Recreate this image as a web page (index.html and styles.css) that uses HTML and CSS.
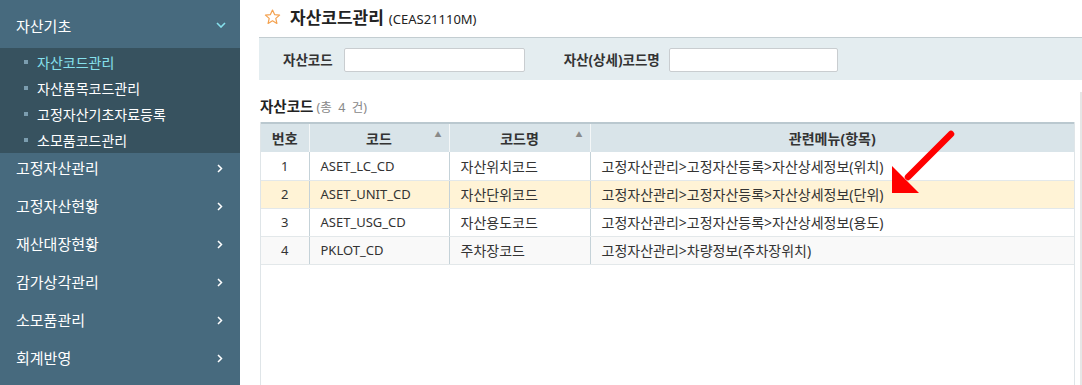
FILE: index.html
```html
<!DOCTYPE html>
<html lang="ko">
<head>
<meta charset="utf-8">
<title>자산코드관리</title>
<link rel="stylesheet" href="styles.css">
</head>
<body>
<aside class="sidebar">
  <div class="side-head">
    <span>자산기초</span>
    <svg class="chev-down" width="10" height="6" viewBox="0 0 10 6"><polyline points="1,1 5,5 9,1" fill="none" stroke="#86e0ec" stroke-width="1.6"/></svg>
  </div>
  <ul class="submenu">
    <li class="sub-item active"><i class="dot"></i>자산코드관리</li>
    <li class="sub-item"><i class="dot"></i>자산품목코드관리</li>
    <li class="sub-item"><i class="dot"></i>고정자산기초자료등록</li>
    <li class="sub-item"><i class="dot"></i>소모품코드관리</li>
  </ul>
  <ul class="menu">
    <li class="menu-item"><span>고정자산관리</span><svg width="6" height="9" viewBox="0 0 6 9"><polyline points="1,1 4.5,4.5 1,8" fill="none" stroke="#fff" stroke-width="1.5"/></svg></li>
    <li class="menu-item"><span>고정자산현황</span><svg width="6" height="9" viewBox="0 0 6 9"><polyline points="1,1 4.5,4.5 1,8" fill="none" stroke="#fff" stroke-width="1.5"/></svg></li>
    <li class="menu-item"><span>재산대장현황</span><svg width="6" height="9" viewBox="0 0 6 9"><polyline points="1,1 4.5,4.5 1,8" fill="none" stroke="#fff" stroke-width="1.5"/></svg></li>
    <li class="menu-item"><span>감가상각관리</span><svg width="6" height="9" viewBox="0 0 6 9"><polyline points="1,1 4.5,4.5 1,8" fill="none" stroke="#fff" stroke-width="1.5"/></svg></li>
    <li class="menu-item"><span>소모품관리</span><svg width="6" height="9" viewBox="0 0 6 9"><polyline points="1,1 4.5,4.5 1,8" fill="none" stroke="#fff" stroke-width="1.5"/></svg></li>
    <li class="menu-item"><span>회계반영</span><svg width="6" height="9" viewBox="0 0 6 9"><polyline points="1,1 4.5,4.5 1,8" fill="none" stroke="#fff" stroke-width="1.5"/></svg></li>
  </ul>
</aside>
<main class="main">
  <div class="title-row">
    <svg class="star" width="17" height="16" viewBox="0 0 17 16"><polygon points="8.5,1 10.6,5.6 15.6,6.1 11.8,9.4 12.9,14.4 8.5,11.8 4.1,14.4 5.2,9.4 1.4,6.1 6.4,5.6" fill="none" stroke="#f4a14e" stroke-width="1.2" stroke-linejoin="round"/></svg>
    <h1 class="title">자산코드관리</h1>
    <span class="title-code">(CEAS21110M)</span>
  </div>
  <div class="search">
    <label class="s-label">자산코드</label>
    <input class="s-input w1" type="text">
    <label class="s-label second">자산(상세)코드명</label>
    <input class="s-input w2" type="text">
  </div>
  <section class="content">
    <div class="grid-title"><b>자산코드</b><span class="count">(총&nbsp; 4&nbsp; 건)</span></div>
    <div class="grid">
      <table class="tbl">
        <colgroup><col class="c1"><col class="c2"><col class="c3"><col class="c4"></colgroup>
        <thead>
          <tr><th>번호</th><th class="sortable">코드<span class="sort">▲</span></th><th class="sortable">코드명<span class="sort">▲</span></th><th>관련메뉴(항목)</th></tr>
        </thead>
        <tbody>
          <tr><td class="num">1</td><td>ASET_LC_CD</td><td class="ko">자산위치코드</td><td class="ko">고정자산관리&gt;고정자산등록&gt;자산상세정보(위치)</td></tr>
          <tr class="hl"><td class="num">2</td><td>ASET_UNIT_CD</td><td class="ko">자산단위코드</td><td class="ko">고정자산관리&gt;고정자산등록&gt;자산상세정보(단위)</td></tr>
          <tr><td class="num">3</td><td>ASET_USG_CD</td><td class="ko">자산용도코드</td><td class="ko">고정자산관리&gt;고정자산등록&gt;자산상세정보(용도)</td></tr>
          <tr class="alt"><td class="num">4</td><td>PKLOT_CD</td><td class="ko">주차장코드</td><td class="ko">고정자산관리&gt;차량정보(주차장위치)</td></tr>
        </tbody>
      </table>
    </div>
  </section>
</main>
<svg class="red-arrow" width="80" height="80" viewBox="0 0 80 80">
  <line x1="65" y1="10" x2="22" y2="53" stroke="#f00" stroke-width="6.5" stroke-linecap="round"/>
  <polygon points="6,69 6,42 33,69" fill="#f00"/>
</svg>
</body>
</html>
```
FILE: styles.css
```css
* { box-sizing: border-box; }
html, body { margin: 0; padding: 0; height: 100%; }
body {
  display: flex;
  font-family: "Noto Sans", "Noto Sans CJK KR", sans-serif;
  color: #333;
  background: #fff;
  overflow: hidden;
  position: relative;
}
ul { list-style: none; margin: 0; padding: 0; }

.sidebar {
  width: 240px;
  flex: 0 0 240px;
  height: 385px;
  background: #476a7e;
  color: #fff;
}
.side-head {
  display: flex;
  justify-content: space-between;
  align-items: center;
  height: 48px;
  padding: 4px 14px 0 16px;
  font-size: 15px;
  line-height: 20px;
}
.chev-down { margin-top: -2px; }
.submenu {
  background: #37525f;
  padding: 1px 0 0 0;
}
.sub-item {
  display: flex;
  align-items: center;
  height: 26px;
  padding-left: 24px;
  font-size: 14px;
  color: #fff;
}
.sub-item.active { color: #86e0ec; }
.dot {
  width: 4px;
  height: 4px;
  background: #7b9daf;
  margin-right: 9px;
}
.menu-item {
  display: flex;
  justify-content: space-between;
  align-items: center;
  height: 38px;
  padding: 0 17px 8px 16px;
  font-size: 15px;
  line-height: 20px;
}

.main {
  flex: 1;
  display: flex;
  flex-direction: column;
  padding-left: 19px;
  height: 385px;
  min-width: 0;
}
.title-row {
  display: flex;
  align-items: center;
  height: 37px;
  padding-left: 5px;
  padding-bottom: 1px;
}
.star { margin-right: 9px; margin-top: -2px; }
.title {
  margin: 0;
  font-size: 17px;
  font-weight: 700;
  color: #222;
  line-height: 22px;
}
.title-code {
  font-size: 13px;
  color: #222;
  margin-left: 5px;
  margin-top: 2px;
}
.search {
  display: flex;
  align-items: center;
  height: 43px;
  border-top: 1px solid #c3cdd1;
  background: #e4edf0;
  padding-left: 24px;
}
.s-label {
  font-size: 13.5px;
  font-weight: 700;
  color: #333;
  margin-right: 11px;
}
.s-label.second { margin-left: 39px; margin-right: 9px; }
.s-input {
  height: 24px;
  border: 1px solid #c9cdd0;
  border-radius: 2px;
  background: #fff;
  margin-top: 1px;
}
.w1 { width: 181px; }
.w2 { width: 169px; }

.content {
  flex: 1;
  display: flex;
  flex-direction: column;
  margin-top: 12px;
  padding-left: 1px;
  padding-right: 5px;
  border-right: 2px solid #e6e6e6;
  min-height: 0;
}
.grid-title {
  padding-top: 5px;
  height: 30px;
  font-size: 14.5px;
  line-height: 18px;
  color: #222;
}
.grid-title b { font-weight: 700; }
.count {
  font-size: 12.5px;
  color: #888;
  margin-left: 3px;
}
.grid {
  flex: 1;
  border-left: 1px solid #dfe5e8;
  border-right: 1px solid #dfe5e8;
}
.tbl {
  width: 100%;
  border-collapse: collapse;
  table-layout: fixed;
  font-size: 13px;
}
.c1 { width: 48px; }
.c2 { width: 140px; }
.c3 { width: 141px; }
.tbl th {
  position: relative;
  height: 29px;
  background: #d9e4e9;
  border-top: 2px solid #bac8cf;
  border-left: 1px solid #f4f7f8;
  font-size: 14px;
  font-weight: 700;
  color: #333;
  text-align: center;
  padding: 0;
}
.tbl th:first-child { border-left: none; }
.sort {
  position: absolute;
  right: 7px;
  top: 5px;
  font-size: 7px;
  color: #8a8a8a;
  font-weight: 400;
}
.tbl td {
  height: 28px;
  padding: 0 0 0 11px;
  border-bottom: 1px solid #e3e8ea;
  border-left: 1px solid #c5d2d8;
  color: #333;
  white-space: nowrap;
}
.tbl td.ko { font-size: 14px; }
.tbl td:first-child { border-left: none; }
.tbl td.num { text-align: center; padding: 0; }
.tbl tr.hl td { background: #fff3d6; }
.tbl tr.alt td { background: #f9f9f9; }

.red-arrow {
  position: absolute;
  left: 886px;
  top: 124px;
}
```
